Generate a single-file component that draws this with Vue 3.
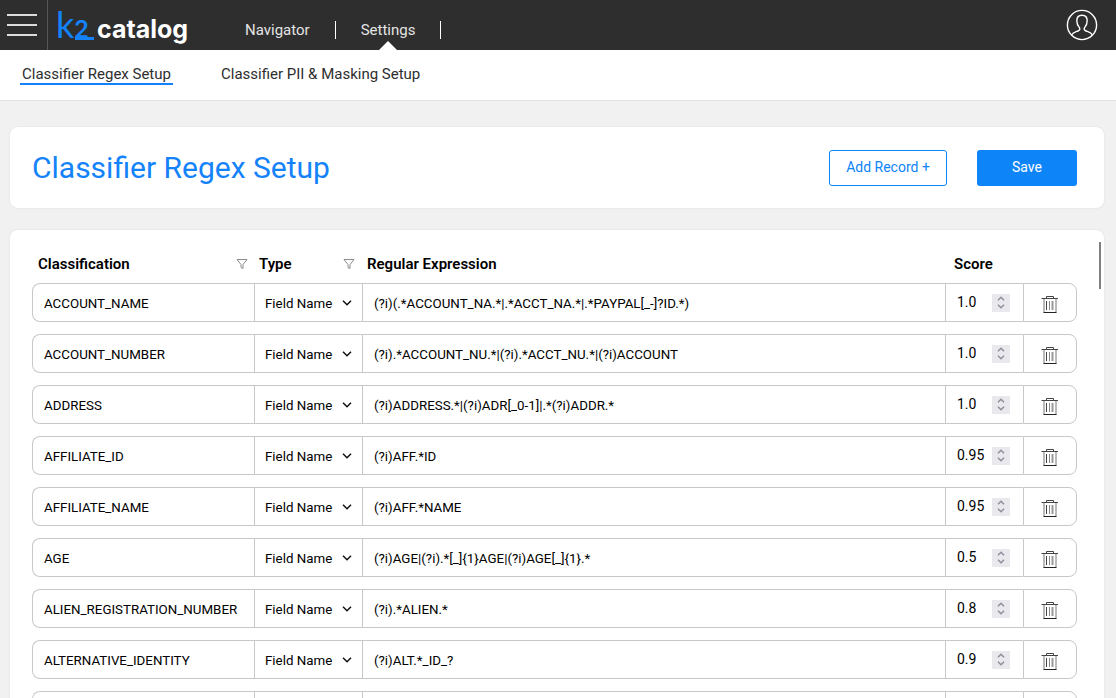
<script setup>
import { ref } from 'vue'

const tabs = ['Classifier Regex Setup', 'Classifier PII & Masking Setup']
const rows = ref([
  { name: 'ACCOUNT_NAME', regex: '(?i)(.*ACCOUNT_NA.*|.*ACCT_NA.*|.*PAYPAL[_-]?ID.*)', score: '1.0' },
  { name: 'ACCOUNT_NUMBER', regex: '(?i).*ACCOUNT_NU.*|(?i).*ACCT_NU.*|(?i)ACCOUNT', score: '1.0' },
  { name: 'ADDRESS', regex: '(?i)ADDRESS.*|(?i)ADR[_0-1]|.*(?i)ADDR.*', score: '1.0' },
  { name: 'AFFILIATE_ID', regex: '(?i)AFF.*ID', score: '0.95' },
  { name: 'AFFILIATE_NAME', regex: '(?i)AFF.*NAME', score: '0.95' },
  { name: 'AGE', regex: '(?i)AGE|(?i).*[_]{1}AGE|(?i)AGE[_]{1}.*', score: '0.5' },
  { name: 'ALIEN_REGISTRATION_NUMBER', regex: '(?i).*ALIEN.*', score: '0.8' },
  { name: 'ALTERNATIVE_IDENTITY', regex: '(?i)ALT.*_ID_?', score: '0.9' },
  { name: '', regex: '', score: '' }
])

function step(row, delta) {
  row.score = String(Math.round((Number(row.score) + delta) * 100) / 100)
}
function addRecord() {
  rows.value.unshift({ name: '', regex: '', score: '1.0' })
}
</script>

<template>
  <div class="app">
    <header class="topbar">
      <button class="menu" aria-label="Menu">
        <svg width="30" height="22" viewBox="0 0 30 22" stroke="#dcdcdc" stroke-width="2">
          <path d="M0 1H30M0 11H30M0 21H30" />
        </svg>
      </button>
      <a class="logo" href="#" aria-label="k2 catalog">
        <span class="mark"><span class="mark-k">k</span><span class="mark-2">2</span></span>
        <span class="word">catalog</span>
      </a>
      <nav class="nav">
        <a href="#">Navigator</a>
        <a href="#" class="current">Settings</a>
      </nav>
      <button class="user" aria-label="User profile">
        <svg width="32" height="32" viewBox="0 0 32 32" fill="none" stroke="#fff" stroke-width="1.4">
          <circle cx="16" cy="16" r="14.6" />
          <path d="M5.5 26C7 23.2 10 22.8 12 22C14 21.2 14.2 20 13.4 18.6C11.6 16.6 10.8 14.6 10.8 11.8C10.8 8.4 12.8 6.2 16 6.2S21.200 8.400 21.200 11.800C21.200 14.600 20.400 16.600 18.600 18.600C17.800 20 18 21.200 20 22C22 22.800 25 23.200 26.500 26" />
        </svg>
      </button>
    </header>

    <nav class="subnav">
      <a v-for="(tab, i) in tabs" :key="tab" href="#" :class="{ active: i === 0 }">{{ tab }}</a>
    </nav>

    <main class="content">
      <section class="card heading">
        <h1>Classifier Regex Setup</h1>
        <button class="btn outline" @click="addRecord">Add Record +</button>
        <button class="btn solid">Save</button>
      </section>

      <section class="card list">
        <div class="thumb"></div>
        <table>
          <colgroup>
            <col class="c-name" /><col class="c-type" /><col /><col class="c-score" /><col class="c-del" />
          </colgroup>
          <thead>
            <tr>
              <th v-for="title in ['Classification', 'Type']" :key="title">
                <div class="th">
                  {{ title }}
                  <button class="filter" :aria-label="'Filter ' + title">
                    <svg width="12" height="12" viewBox="0 0 12 12" fill="none" stroke="#8c8c8c">
                      <path d="M1 1.500H11L7 6.500V10.500L5 9.500V6.500Z" />
                    </svg>
                  </button>
                </div>
              </th>
              <th><div class="th">Regular Expression</div></th>
              <th><div class="th score-title">Score</div></th>
              <th></th>
            </tr>
          </thead>
          <tbody>
            <tr v-for="(row, i) in rows" :key="i">
              <td><input v-model="row.name" class="field" type="text" aria-label="Classification" /></td>
              <td>
                <div class="type">
                  <select aria-label="Type">
                    <option>Field Name</option>
                    <option>Data</option>
                  </select>
                  <svg width="10" height="6" viewBox="0 0 10 6" fill="none" stroke="#111" stroke-width="1.500">
                    <path d="M1 0.800L5 4.800L9 0.800" />
                  </svg>
                </div>
              </td>
              <td><input v-model="row.regex" class="field" type="text" aria-label="Regular expression" /></td>
              <td>
                <div class="score">
                  <input v-model="row.score" type="text" inputmode="decimal" aria-label="Score" />
                  <span class="spin">
                    <button aria-label="Increase score" @click="step(row, 0.1)">
                      <svg width="8" height="5" viewBox="0 0 8 5"><path d="M1 4.200L4 1.200L7 4.200" /></svg>
                    </button>
                    <button aria-label="Decrease score" @click="step(row, -0.1)">
                      <svg width="8" height="5" viewBox="0 0 8 5"><path d="M1 0.800L4 3.800L7 0.800" /></svg>
                    </button>
                  </span>
                </div>
              </td>
              <td>
                <button class="trash" aria-label="Delete record" @click="rows.splice(i, 1)">
                  <svg width="18" height="18" viewBox="0 0 18 18" fill="none" stroke="#444">
                    <path d="M0.500 3.500H17" />
                    <path d="M5.500 3V1.500H12.500V3" />
                    <path d="M3 4V17.500M15 4V17.500" stroke="#777" />
                    <path d="M2.500 17.500H15.500" stroke="#222" />
                    <path d="M5.500 6V15" stroke="#444" />
                    <path d="M8.500 6V15" stroke="#888" />
                    <path d="M11.500 6V15" stroke="#999" stroke-width="2" />
                  </svg>
                </button>
              </td>
            </tr>
          </tbody>
        </table>
      </section>
    </main>
  </div>
</template>

<style>
body {
  background: #f1f1f1;
}
</style>

<style scoped>
.app {
  height: 100vh;
  overflow: hidden;
  display: flex;
  flex-direction: column;
  font-family: Roboto, "Liberation Sans", sans-serif;
  color: #000;
}
.app * {
  box-sizing: border-box;
}
button,
input,
select {
  font-family: inherit;
  color: inherit;
  margin: 0;
  padding: 0;
  border: 0;
  background: none;
  outline: none;
}
button {
  cursor: pointer;
}
a {
  color: inherit;
  text-decoration: none;
}
svg {
  display: block;
}
.topbar {
  flex: none;
  height: 50px;
  display: flex;
  align-items: center;
  background: #2e2e2e;
  color: #e4e4e4;
}
.menu {
  width: 48px;
  height: 50px;
  padding-left: 7px;
  border-right: 1px solid #565656;
}
.logo {
  display: flex;
  align-items: baseline;
  width: 197px;
  padding: 6px 0 0 8px;
  font-family: Inter, sans-serif;
  line-height: 44px;
}
.mark {
  position: relative;
  width: 41px;
  color: #1483fb;
  font-family: Lato, sans-serif;
}
.mark::after {
  content: "";
  position: absolute;
  right: 3px;
  bottom: 14px;
  width: 19px;
  height: 3px;
  background: #1483fb;
}
.mark-k {
  font-size: 36px;
}
.mark-2 {
  font-size: 25px;
  font-weight: 700;
}
.word {
  color: #fff;
  font-size: 25px;
  font-weight: 700;
}
.nav {
  display: flex;
  align-self: stretch;
  padding-top: 10px;
  font-size: 15px;
  line-height: 40px;
}
.nav a {
  position: relative;
  padding-right: 26px;
  margin-right: 25px;
}
.nav a::after {
  content: "";
  position: absolute;
  right: 0;
  top: 11px;
  width: 1px;
  height: 18px;
  background: #fff;
}
.nav .current::before {
  content: "";
  position: absolute;
  left: 18px;
  bottom: 0;
  border: 9px solid transparent;
  border-top: 0;
  border-bottom-color: #fff;
}
.user {
  margin: 0 18px 0 auto;
}
.subnav {
  flex: none;
  height: 51px;
  display: flex;
  align-items: flex-start;
  gap: 46px;
  padding: 15px 20px 0;
  background: #fff;
  border-bottom: 1px solid #e3e3e3;
  color: #2e2e2e;
  font-size: 15px;
  line-height: 18px;
}
.subnav a {
  padding: 0 2px;
  border-bottom: 2px solid transparent;
}
.subnav .active {
  border-color: #1483fb;
}
.content {
  flex: 1;
  min-height: 0;
  display: flex;
  flex-direction: column;
  gap: 22px;
  padding: 26px 12px 0 10px;
}
.card {
  background: #fff;
  border-radius: 8px;
  box-shadow: 0 0 2px rgba(0, 0, 0, 0.1);
}
.heading {
  flex: none;
  height: 81px;
  display: flex;
  align-items: center;
  gap: 30px;
  padding: 0 27px 0 22px;
}
h1 {
  flex: 1;
  margin: 0;
  color: #1483fb;
  font-size: 30px;
  font-weight: 400;
}
.btn {
  height: 36px;
  border-radius: 3px;
  padding-bottom: 2px;
  font-size: 14px;
}
.outline {
  width: 118px;
  border: 1px solid #0d84f8;
  color: #0d84f8;
}
.solid {
  width: 100px;
  background: #0d84f8;
  color: #fff;
}
.list {
  position: relative;
  flex: 1;
  min-height: 0;
  overflow: hidden;
  border-radius: 8px 8px 0 0;
  padding: 15px 27px 0 22px;
}
.thumb {
  position: absolute;
  top: 12px;
  right: 3px;
  width: 2px;
  height: 47px;
  background: #7f7f7f;
}
table {
  width: 100%;
  table-layout: fixed;
  border-collapse: separate;
  border-spacing: 0 12px;
}
.c-name {
  width: 222px;
}
.c-type {
  width: 108px;
}
.c-score {
  width: 78px;
}
.c-del {
  width: 54px;
}
th {
  padding: 0;
  text-align: left;
  font-size: 15px;
  font-weight: 600;
}
.th {
  display: flex;
  align-items: center;
  justify-content: space-between;
  height: 14px;
  padding: 0 7px 0 5px;
  line-height: 14px;
}
th:first-child .th {
  padding: 0 6px;
}
.th.score-title {
  padding-left: 9px;
}
td {
  height: 39px;
  padding: 0;
  border: 1px solid #c8c8c8;
  border-right: 0;
}
td:first-child {
  border-radius: 8px 0 0 8px;
}
td:last-child {
  border-right: 1px solid #c8c8c8;
  border-radius: 0 8px 8px 0;
}
.field {
  display: block;
  width: 100%;
  height: 37px;
  padding: 2px 11px 0;
}
.type {
  position: relative;
}
.type select {
  display: block;
  width: 100%;
  height: 37px;
  padding: 2px 0 0 10px;
  appearance: none;
}
.type svg {
  position: absolute;
  right: 10px;
  top: 16px;
  pointer-events: none;
}
.score {
  display: flex;
  align-items: center;
  height: 37px;
  padding: 0 13px 0 11px;
}
.score input {
  flex: 1;
  min-width: 0;
  height: 37px;
  padding-bottom: 1px;
  font-size: 14px;
}
.spin {
  width: 18px;
  height: 18px;
  display: flex;
  flex-direction: column;
  align-items: center;
  justify-content: center;
  gap: 3px;
  background: #e9e9ed;
}
.spin svg {
  fill: none;
  stroke: #8f8f9d;
  stroke-width: 1.500;
}
.trash {
  display: block;
  margin: 3px auto 0;
}
</style>
